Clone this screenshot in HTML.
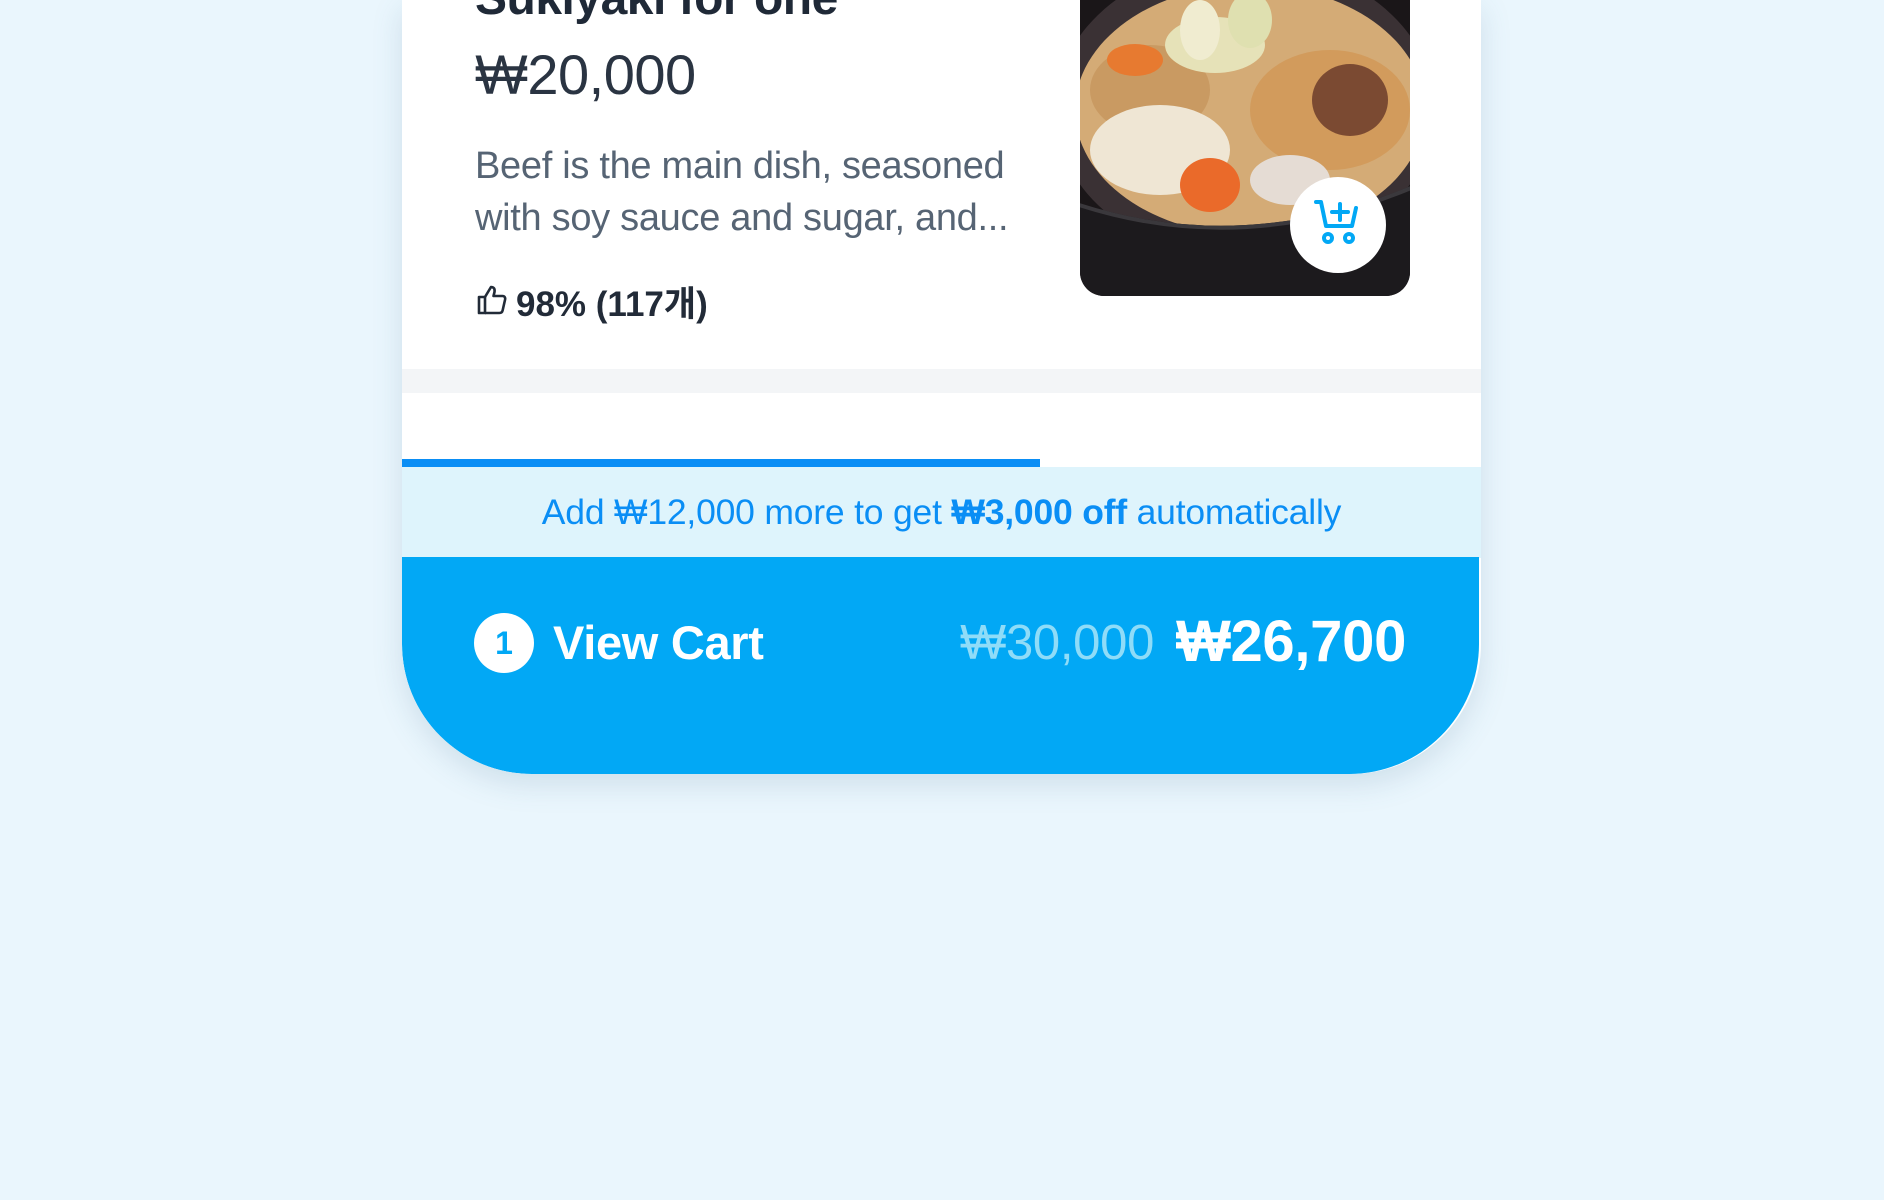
<!DOCTYPE html>
<html><head><meta charset="utf-8">
<style>
*{margin:0;padding:0;box-sizing:border-box}
body{width:1884px;height:1200px;background:#eaf6fd;font-family:"Liberation Sans","Noto Sans CJK KR",sans-serif;position:relative;overflow:hidden}
.card{position:absolute;left:402px;top:0;width:1079px;height:774px;background:#fff;border-radius:0 0 130px 130px;box-shadow:0 10px 30px rgba(80,120,150,.18);overflow:hidden}
.t{position:absolute;left:73px;color:#1f2937;white-space:nowrap}
.title{top:-29px;font-size:48px;font-weight:bold;letter-spacing:-0.5px}
.price{top:42px;font-size:56px;color:#2a3442;letter-spacing:-0.5px}
.desc{top:140px;font-size:38px;line-height:52px;color:#566474;letter-spacing:-0.3px}
.rate{top:276px;font-size:35px;font-weight:bold;left:114px;color:#222b38;letter-spacing:0}
.img{position:absolute;left:678px;top:-30px;width:330px;height:326px;border-radius:24px;overflow:hidden}
.btn{position:absolute;left:888px;top:177px;width:96px;height:96px;border-radius:50%;background:#fff}
.gray{position:absolute;left:0;top:369px;width:100%;height:24px;background:#f3f5f7}
.bar{position:absolute;left:0;top:459px;width:638px;height:8px;background:#0a8ef5}
.banner{position:absolute;left:0;top:467px;width:100%;height:91px;background:#def4fc;text-align:center;font-size:35.5px;line-height:91px;color:#0a8ef5;letter-spacing:-0.2px}
.cart{position:absolute;left:0;top:557px;width:1077px;height:217px;background:#02a8f5;border-radius:0 0 130px 130px}
.num{position:absolute;left:72px;top:56px;width:60px;height:60px;border-radius:50%;background:#fff;color:#02a8f5;font-weight:bold;font-size:32px;text-align:center;line-height:60px}
.vc{position:absolute;left:151px;top:56px;font-size:47px;font-weight:bold;color:#fff;line-height:60px;letter-spacing:-0.3px}
.old{position:absolute;left:558px;top:56px;font-size:49px;color:#8fdcf8;line-height:60px;letter-spacing:-0.3px}
.new{position:absolute;left:774px;top:55px;font-size:58px;font-weight:bold;color:#fff;line-height:60px;letter-spacing:-0.3px}
</style></head><body>
<div class="card">
 <div class="t title">Sukiyaki for one</div>
 <div class="t price">₩20,000</div>
 <div class="t desc">Beef is the main dish, seasoned<br>with soy sauce and sugar, and...</div>
 <svg style="position:absolute;left:75px;top:284px" width="30" height="31" viewBox="0 0 30 31" fill="none" stroke="#222b38" stroke-width="2.6" stroke-linejoin="round"><path d="M2 13h6v16H2z"/><path d="M8 13l6-10c3 0 4 2 3.5 5L16.5 12h9c2 0 3 1.5 2.6 3.5l-2.5 11c-.4 1.8-1.6 2.5-3.3 2.5H8"/></svg>
 <div class="t rate">98% (117개)</div>
 <div class="img"><svg width="330" height="326" viewBox="0 0 330 326">
  <rect width="330" height="326" fill="#1a1618"/>
  <ellipse cx="165" cy="140" rx="190" ry="150" fill="#3a3134"/>
  <ellipse cx="170" cy="140" rx="175" ry="125" fill="#d4ab76"/>
  <ellipse cx="70" cy="120" rx="60" ry="45" fill="#c99a62"/>
  <ellipse cx="80" cy="180" rx="70" ry="45" fill="#efe6d4"/>
  <ellipse cx="250" cy="140" rx="80" ry="60" fill="#d29b5c"/>
  <ellipse cx="135" cy="75" rx="50" ry="28" fill="#e6e2b8"/>
  <ellipse cx="120" cy="60" rx="20" ry="30" fill="#f0ecd0"/>
  <ellipse cx="170" cy="50" rx="22" ry="28" fill="#dfe0b0"/>
  <ellipse cx="130" cy="215" rx="30" ry="27" fill="#ea6a2a"/>
  <ellipse cx="55" cy="90" rx="28" ry="16" fill="#e77a30"/>
  <ellipse cx="270" cy="130" rx="38" ry="36" fill="#7b4a32"/>
  <ellipse cx="210" cy="210" rx="40" ry="25" fill="#e5dcd4"/>
  <path d="M-10 230 Q165 290 345 210 L345 330 L-10 330Z" fill="#1c1a1d"/>
  <path d="M-10 232 Q165 292 345 212" stroke="#3a383c" stroke-width="4" fill="none"/>
 </svg></div>
 <div class="btn"><svg style="position:absolute;left:23px;top:21px" width="50" height="50" viewBox="0 0 50 50" fill="none" stroke="#02a8f5" stroke-width="4" stroke-linecap="round" stroke-linejoin="round"><path d="M3 4h5l5 24h26l4-18"/><path d="M27 6v16M19 14h16"/><circle cx="15" cy="40" r="4"/><circle cx="36" cy="40" r="4"/></svg></div>
 <div class="gray"></div>
 <div class="bar"></div>
 <div class="banner">Add ₩12,000 more to get <b>₩3,000 off</b> automatically</div>
 <div class="cart">
  <div class="num">1</div>
  <div class="vc">View Cart</div>
  <div class="old">₩30,000</div>
  <div class="new">₩26,700</div>
 </div>
</div>
</body></html>
